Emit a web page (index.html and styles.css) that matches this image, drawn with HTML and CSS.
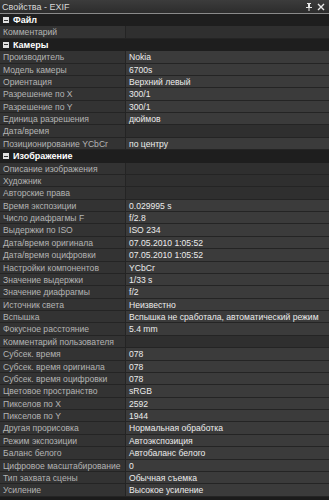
FILE: index.html
```html
<!DOCTYPE html>
<html lang="ru">
<head>
  <meta charset="UTF-8" />
  <title>Свойства - EXIF</title>
  <link rel="stylesheet" href="styles.css">
</head>
<body>
  <div class="panel">
    <div class="titlebar">
      <span class="title">Свойства - EXIF</span>
      <span class="tools">
        <svg width="8" height="8" viewBox="0 0 8 8"><path d="M2 0h4v1h-1v3h2v1h-2.5v3h-1v-3h-2.5v-1h2v-3h-1z" fill="#e8e8e8"/></svg>
        <svg width="8" height="8" viewBox="0 0 8 8"><path d="M1 1l6 6M7 1l-6 6" stroke="#e8e8e8" stroke-width="1.4"/></svg>
      </span>
    </div>

    <div class="grid">
      <div class="cat"><span class="box"></span>Файл</div>
      <div class="row"><span class="name">Комментарий</span><span class="val"></span></div>

      <div class="cat"><span class="box"></span>Камеры</div>
      <div class="row"><span class="name">Производитель</span><span class="val">Nokia</span></div>
      <div class="row"><span class="name">Модель камеры</span><span class="val">6700s</span></div>
      <div class="row"><span class="name">Ориентация</span><span class="val">Верхний левый</span></div>
      <div class="row"><span class="name">Разрешение по X</span><span class="val">300/1</span></div>
      <div class="row"><span class="name">Разрешение по Y</span><span class="val">300/1</span></div>
      <div class="row"><span class="name">Единица разрешения</span><span class="val">дюймов</span></div>
      <div class="row"><span class="name">Дата/время</span><span class="val"></span></div>
      <div class="row"><span class="name">Позиционирование YCbCr</span><span class="val">по центру</span></div>

      <div class="cat"><span class="box"></span>Изображение</div>
      <div class="row"><span class="name">Описание изображения</span><span class="val"></span></div>
      <div class="row"><span class="name">Художник</span><span class="val"></span></div>
      <div class="row"><span class="name">Авторские права</span><span class="val"></span></div>
      <div class="row"><span class="name">Время экспозиции</span><span class="val">0.029995 s</span></div>
      <div class="row"><span class="name">Число диафрагмы F</span><span class="val">f/2.8</span></div>
      <div class="row"><span class="name">Выдержки по ISO</span><span class="val">ISO 234</span></div>
      <div class="row"><span class="name">Дата/время оригинала</span><span class="val">07.05.2010 1:05:52</span></div>
      <div class="row"><span class="name">Дата/время оцифровки</span><span class="val">07.05.2010 1:05:52</span></div>
      <div class="row"><span class="name">Настройки компонентов</span><span class="val">YCbCr</span></div>
      <div class="row"><span class="name">Значение выдержки</span><span class="val">1/33 s</span></div>
      <div class="row"><span class="name">Значение диафрагмы</span><span class="val">f/2</span></div>
      <div class="row"><span class="name">Источник света</span><span class="val">Неизвестно</span></div>
      <div class="row"><span class="name">Вспышка</span><span class="val">Вспышка не сработала, автоматический режим</span></div>
      <div class="row"><span class="name">Фокусное расстояние</span><span class="val">5.4 mm</span></div>
      <div class="row"><span class="name">Комментарий пользователя</span><span class="val"></span></div>
      <div class="row"><span class="name">Субсек. время</span><span class="val">078</span></div>
      <div class="row"><span class="name">Субсек. время оригинала</span><span class="val">078</span></div>
      <div class="row"><span class="name">Субсек. время оцифровки</span><span class="val">078</span></div>
      <div class="row"><span class="name">Цветовое пространство</span><span class="val">sRGB</span></div>
      <div class="row"><span class="name">Пикселов по X</span><span class="val">2592</span></div>
      <div class="row"><span class="name">Пикселов по Y</span><span class="val">1944</span></div>
      <div class="row"><span class="name">Другая прорисовка</span><span class="val">Нормальная обработка</span></div>
      <div class="row"><span class="name">Режим экспозиции</span><span class="val">Автоэкспозиция</span></div>
      <div class="row"><span class="name">Баланс белого</span><span class="val">Автобаланс белого</span></div>
      <div class="row"><span class="name">Цифровое масштабирование</span><span class="val">0</span></div>
      <div class="row"><span class="name">Тип захвата сцены</span><span class="val">Обычная съемка</span></div>
      <div class="row"><span class="name">Усиление</span><span class="val">Высокое усиление</span></div>
    </div>
  </div>
</body>
</html>
```

FILE: styles.css
```css
body {
  margin: 0;
  background: #1b1b1b;
  font-family: "Liberation Sans", Arial, sans-serif;
  font-size: 8.6px;
  color: #e6e6e6;
}

.panel {
  width: 329px;
  height: 500px;
  overflow: hidden;
  background: #1b1b1b;
}

.titlebar {
  height: 13px;
  display: flex;
  align-items: center;
  justify-content: space-between;
  padding: 0 4px 0 2px;
  background: linear-gradient(#3c3c3c, #2c2c2c);
  border-bottom: 1px solid #8a8a8a;
}

.title {
  color: #d8d8d8;
  font-size: 9px;
}

.tools {
  display: flex;
  gap: 4px;
}

.tools svg {
  display: block;
}

.cat {
  height: 12.375px;
  box-sizing: border-box;
  display: flex;
  align-items: center;
  background: #1e1e1e;
  color: #ffffff;
  font-weight: bold;
  font-size: 9px;
  padding-left: 3px;
}

.box {
  width: 6px;
  height: 6px;
  background: #e0e0e0;
  margin-right: 4px;
  position: relative;
}

.box::after {
  content: "";
  position: absolute;
  left: 1px;
  top: 2.5px;
  width: 4px;
  height: 1px;
  background: #333;
}

.row {
  height: 12.375px;
  box-sizing: border-box;
  display: flex;
  border-bottom: 1px solid #242424;
}

.name {
  width: 126px;
  flex: none;
  box-sizing: border-box;
  padding-left: 3px;
  background: #333333;
  color: #b4b4b4;
  border-right: 1px solid #242424;
  line-height: 12px;
  white-space: nowrap;
  overflow: hidden;
}

.val {
  flex: 1;
  padding-left: 3px;
  background: #3b3b3b;
  color: #ececec;
  line-height: 12px;
  white-space: nowrap;
  overflow: hidden;
}

.val:empty {
  background: #2f2f2f;
}
```
